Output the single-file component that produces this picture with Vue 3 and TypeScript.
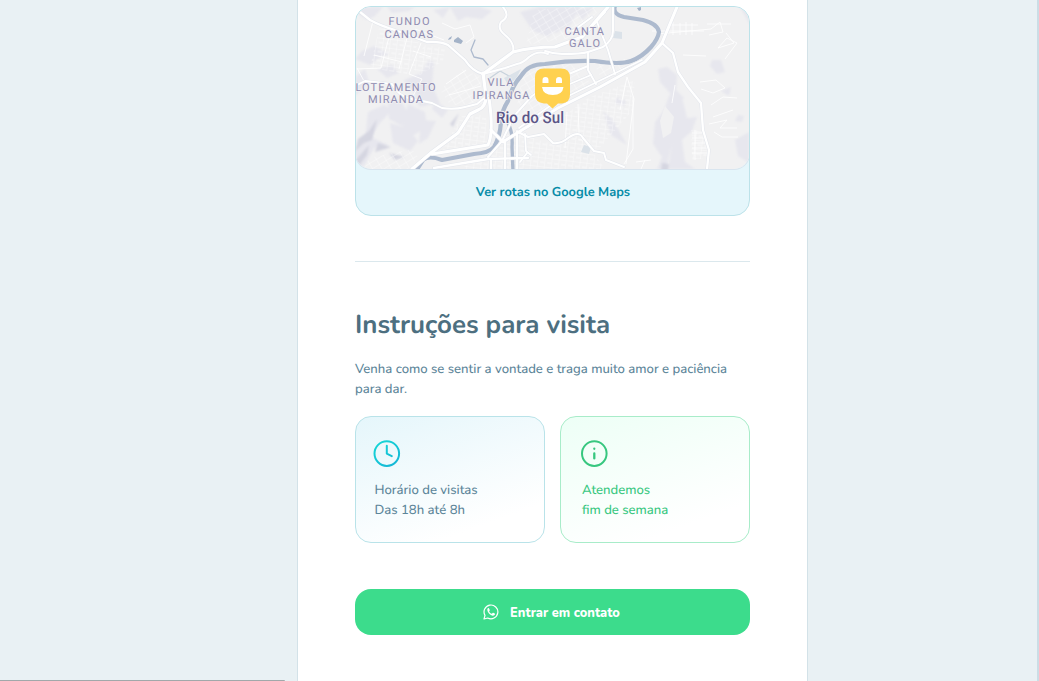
<script setup lang="ts">
interface Street { d: string; w: number }
interface Label { text: string; x: number; y: number; width: number }
interface Patch { points: string; grid: string }

const roads: Street[] = [
  { d: 'M355 8L370 20Q381 26 395 30L427 42Q440 41 448 45L465 60Q472 71 483 74', w: 2.3 },
  { d: 'M483 74L513 52Q532 47 555 47L582 37L608 7', w: 3.2 },
  { d: 'M503 7Q511 16 501 22Q497 29 505 35Q515 43 513 52', w: 2 },
  { d: 'M483 73L486 96Q486 107 478 110L470 114L458 133L432 152L412 169', w: 3.2 },
  { d: 'M432 154L488 145Q494 133 489 98', w: 3 },
  { d: 'M434 168L488 159L528 158', w: 2.3 },
  { d: 'M491 130L503 142L522 130L558 108L600 87L645 62L662 43L677 7', w: 3 },
  { d: 'M519 128L554 103L595 83L642 60', w: 1.7 },
  { d: 'M488 157L502 141L514 116L532 96L563 75', w: 2 },
  { d: 'M662 43L673 53L678 72L688 87L701 103L703 130L709 150L707 169', w: 2.3 },
  { d: 'M597 22L608 50L615 74', w: 1.9 },
  { d: 'M588 52L588 70L596 84', w: 1.9 },
  { d: 'M545 51Q554 54 562 54Q582 54 588 52L603 47Q613 40 613 31V7', w: 1.9 },
  { d: 'M545 84L588 66M551 92L591 75', w: 1.9 },
  { d: 'M483 74L505 68L517 64Q523 63 529 57Q538 50 548 54', w: 2 },
  { d: 'M518 132L528 137L544 134L553 143Q561 144 568 138Q579 130 583 138L594 151L604 153L606 160L624 167', w: 2 },
  { d: 'M355 86L365 81L392 84Q399 97 412 99L432 103L442 108Q454 110 465 107L477 104L488 95', w: 1.9 },
  { d: 'M505 140V169M517 131V169M491 160V169', w: 1.9 },
  { d: 'M525 134L526 151L531 155M520 162L527 153', w: 1.8 },
  { d: 'M573 31L592 17M581 38L605 12', w: 2 },
]
const labels: Label[] = [
  { text: 'FUNDO', x: 388.5, y: 25.4, width: 41 },
  { text: 'CANOAS', x: 384.5, y: 38.2, width: 48.5 },
  { text: 'LOTEAMENTO', x: 355.5, y: 90.8, width: 80 },
  { text: 'MIRANDA', x: 368, y: 103.4, width: 55 },
  { text: 'VILA', x: 487.5, y: 86.4, width: 26 },
  { text: 'IPIRANGA', x: 472.5, y: 99, width: 57 },
  { text: 'CANTA', x: 564.5, y: 34.6, width: 39.5 },
  { text: 'GALO', x: 569, y: 47.2, width: 31 },
]
const patches: Patch[] = [
  { points: '380,24 419,40 407,74 370,68', grid: 'a' },
  { points: '425,45 445,48 443,61 420,75 410,66', grid: 'a' },
  { points: '463,69 480,77 483,104 450,105 440,90', grid: 'b' },
  { points: '462,116 486,115 487,143 440,151', grid: 'a' },
  { points: '493,141 515,128 535,139 552,144 581,136 605,169 460,169 482,157', grid: 'a' },
  { points: '534,10 573,7 602,7 572,38 526,45', grid: 'b' },
  { points: '523,72 548,62 570,63 592,84 528,125 515,117', grid: 'b' },
  { points: '594,64 638,57 618,71 602,80', grid: 'b' },
  { points: '588,98 635,80 632,111 598,150 563,132 565,115', grid: 'a' },
  { points: '369,158 412,149 418,157 408,169 364,169', grid: 'b' },
  { points: '691,130 704,130 709,158 692,160', grid: 'a' },
]
</script>

<template>
  <div class="page">
    <main class="panel">
      <section class="location">
        <svg class="map" viewBox="356 7 393 162" aria-label="Rio do Sul">
          <defs>
            <pattern id="grid-a" width="7" height="9" patternUnits="userSpaceOnUse" patternTransform="rotate(7)">
              <path d="M0 0H7M0 0V9M3 5H7" />
            </pattern>
            <pattern id="grid-b" width="8" height="6" patternUnits="userSpaceOnUse" patternTransform="rotate(-31)">
              <path d="M0 0H8M0 0V6" />
            </pattern>
            <filter id="relief" x="-10%" y="-10%" width="120%" height="120%"><feGaussianBlur stdDeviation="1.3" /></filter>
          </defs>
          <rect x="355" y="6" width="396" height="165" fill="#f1f1f2" />
          <g filter="url(#relief)" fill="#e7e7ee">
            <path d="M355 7h28l-8 9-8 4-12-8zM387 7h28l-6 4-17 2zM450 7h30l12 4-10 8-16-2-8 4zM433 10l17-3-7 11zM362 51l12-5 15 8-10 4-9 7-15-6zM377 69l15-4 7 8-12 5zM404 80l17-7 8-13 5 2-2 23 8 18-21 4-3-12zM355 77l10-8 4 13-14 14zM388 99l13 2 9 15-8 10-13-7zM408 104l17 8 2 15-15 9-10-6z" />
            <path d="M368 112l16-7 8 5-12 13-9 14 17 8-14 3-10 18-9 3v-17l10-12zM390 123l17 5 11 13-8 10-17-8zM421 120l15 1-8 17-9 6zM435 100l13 10-6 8-10-9zM520 12l20-5 24 3-2 14-14 13-16-7z" />
            <path d="M545 7h35l-9 17-15 9-12-8zM574 10l21-3-13 13zM658 69l9-2 10 8-1 15 8 8-5 5-10-11-9-10zM712 60h9l4 12-8 2-7-8zM674 91l9 10 4 17 10-1-5 14-10 9 3 22 10 7h-27l4-25-6 25h-9l5-12-9-13 2-22 9-12 5-14zM603 111l10 9 14 25-16-10zM617 97l9 4-2 5-9-3zM735 140l14-8v31l-11-7zM738 115l6 1-2 6-7-1zM740 7l10 18V7zM721 91l10-4-2 9z" />
          </g>
          <path d="M665 106l-5 15 3 17 8-5 3-16z" fill="#f1f1f2" />
          <g filter="url(#relief)" fill="#d5d6e1">
            <path d="M377 119l-8 12-11 8-3 13 9-9 8-3zM369 145l-14 16 2 7 10-13zM378 143l13 4-16 5zM459 113l-9 11 3 3zM662 163l7 1-1 7h-7zM389 153l16 4-10 3z" />
          </g>
          <g class="minor">
            <polygon v-for="patch in patches" :key="patch.points" :points="patch.points" :fill="`url(#grid-${patch.grid})`" stroke="none" />
            <path d="M373 21l-9 35M391 29l-10 39-24 1M408 34l-9 35M421 43l-12 31 13 5-9 17M431 57l-18-6M442 23l13 6 15-4 4 12-8 6M415 29l29 11M374 55l28 7M364 81l-7-13M446 84l20-14M449 95l32-9M620 110l7-33 7 22-8 65M633 97v52l-9 15M567 112l-2 36M578 104l1 29M657 34l54-5 9-7 3 10-14 3M652 31h52M671 25h27M673 22v13M680 23v12M686 22v13M692 23v12M707 24h24M726 33l8 10-16 5 9-10 10 5-12 16M683 55l23 1M700 82l16-2 9 8-12 5-12-4M672 103l3-18M709 124l18-4-7 8h17M713 117l20-7M711 105l12-8 14 1M714 132l8 5h16M692 133h13M692 138h14M692 143h15M692 148h16M692 153h17M695 130v30M636 162l15-2M641 169l4-9" />
          </g>
          <g fill="none" stroke="#adbace" stroke-linecap="round" stroke-linejoin="round">
            <path d="M615 6Q612 14 624 17L643 20Q658 24 659 32Q658 39 651 47Q642 57 631 61Q620 65 595 61Q570 60 545 64Q528 64 521 76Q512 86 508 101Q501 112 501 122Q500 137 494 147Q489 153 474 154L442 160Q429 155 423 160L416 171" stroke-width="4.2" />
            <path d="M508 123Q513 132 512 147L513 171" stroke-width="3.4" />
            <path d="M475 40L471 50L474 57L483 59L488 65" stroke-width="1.3" />
            <path d="M490 78L500 71L509 76L516 74" stroke="#c7d2dc" stroke-width="1.3" />
          </g>
          <path d="M449 38l3-2-1 3-3 1zM454 40l4-3 5 4-2 3-7-2zM637 8l4-1v3l-2 1z" fill="#a4b3c8" />
          <path d="M615 31l7 1v7l-9-1zM584 145l7 2-2 7-8-2zM504 78l17-9-4 8-8 9z" fill="#dbe2e9" />
          <g fill="none" stroke-linecap="round" stroke-linejoin="round">
            <path v-for="road in roads" :key="`edge-${road.d}`" :d="road.d" stroke="#e3e6ec" :stroke-width="road.w + 1" />
            <path v-for="road in roads" :key="road.d" :d="road.d" stroke="#fff" :stroke-width="road.w" />
          </g>
          <g class="district">
            <text v-for="label in labels" :key="label.text" :x="label.x" :y="label.y" :textLength="label.width">{{ label.text }}</text>
          </g>
          <path d="M544 68.5h17q9 0 9 9v17q0 8-8 9h-4l-5.5 5-5.5-5h-3q-9-1-9-9v-17q0-9 9-9z" fill="#ffd14f" />
          <path d="M542.5 83v-3q0-3 3-3t3 3v3zM556 83v-3q0-3 3-3t3 3v3zM542 87h21.5q-1 8-10.7 8T542 87z" fill="#fff" />
          <text class="city" x="496" y="122.7" textLength="68" lengthAdjust="spacingAndGlyphs">Rio do Sul</text>
        </svg>
        <a class="routes">Ver rotas no Google Maps</a>
      </section>

      <hr class="divider">
      <h2 class="title">Instruções para visita</h2>
      <p class="description">Venha como se sentir a vontade e traga muito amor e paciência<br>para dar.</p>

      <div class="details">
        <article class="card hours">
          <svg class="icon" viewBox="0 0 28 28" fill="none">
            <defs><linearGradient id="clock" x1="4" y1="2" x2="22" y2="26" gradientUnits="userSpaceOnUse"><stop stop-color="#15d6d6" /><stop offset="1" stop-color="#15b6d6" /></linearGradient></defs>
            <g stroke="url(#clock)" stroke-width="2" stroke-linecap="round" stroke-linejoin="round"><circle cx="13.8" cy="13.6" r="12.3" /><path d="M13.8 5.8V13.6L18.8 16.1" /></g>
          </svg>
          <p>Horário de visitas<br>Das 18h até 8h</p>
        </article>
        <article class="card weekend">
          <svg class="icon" viewBox="0 0 28 28" fill="none" stroke="#37c77f" stroke-width="2" stroke-linecap="round">
            <circle cx="14.3" cy="13.6" r="12.3" /><path d="M14.3 13.4V18.4M14.3 8.7v.1" stroke-width="2.3" />
          </svg>
          <p>Atendemos<br>fim de semana</p>
        </article>
      </div>

      <button class="contact" type="button">
        <svg class="whatsapp" viewBox="0 0 16 16">
          <path d="M1 15l1-3.6A6.9 6.9 0 1 1 4.7 14z" fill="none" stroke="white" stroke-width="1.2" stroke-linejoin="round" />
          <path d="M5.4 3.9c-.4 0-1.1.7-1.1 1.7 0 3.1 3.4 5.9 5.5 6.1.9.1 2.1-.7 2.2-1.4.1-.6-.1-.7-1.7-1.5-.3-.1-.5 0-.7.2l-.7.8c-1.3-.4-2.2-1.4-2.8-2.4l.6-.8c.2-.3 0-.5-.5-1.8-.2-.6-.3-.9-.8-.9z" fill="white" />
        </svg>
        <span>Entrar em contato</span>
      </button>
    </main>
    <div class="status"></div>
  </div>
</template>

<style>
html, body { margin: 0; overflow: hidden; }
</style>

<style scoped>
* { box-sizing: border-box; }
.page {
  position: relative;
  height: 681px;
  padding-left: 297px;
  background: #e9f1f4;
  border-right: 2px solid #cbdde5;
  font-family: Nunito, Lato, "Open Sans", sans-serif;
  text-rendering: geometricPrecision;
  overflow: hidden;
}
.panel {
  width: 511px;
  height: 681px;
  padding: 6px 57px 0;
  background: white;
  border: solid #d3e2e8;
  border-width: 0 1px;
}
.location {
  height: 210px;
  overflow: hidden;
  background: #e5f6fb;
  border: 1px solid #bce2e9;
  border-radius: 16px;
}
.map {
  display: block;
  width: 393px;
  height: 162px;
  border-radius: 15px;
  box-shadow: 0 0 0 1px #d9e5ef;
}
.minor { fill: none; stroke: #fff; stroke-width: .8; }
pattern path { fill: none; stroke: #fff; stroke-width: .6; }
.district { font: 11px Roboto, sans-serif; fill: #8f8bb0; stroke: #f1f1f3; stroke-width: 1.4px; paint-order: stroke; }
.city { font: 500 16px Roboto, sans-serif; fill: #5c5687; stroke: #f5f5f7; stroke-width: 2px; paint-order: stroke; }
.routes {
  display: block;
  height: 46px;
  padding-left: 1px;
  line-height: 46px;
  text-align: center;
  color: #078ca8;
  font-size: 12.8px;
  font-weight: 700;
}
.divider { height: 1px; margin: 45px 0 47px; border: 0; background: #dbe8ed; }
.title { margin: 0; color: #4d6f80; font-size: 25.9px; line-height: 34px; font-weight: 700; }
.description { margin: 16px 0 17px; color: #5c8599; font-size: 13.1px; font-weight: 500; line-height: 20px; white-space: nowrap; }
.details { display: grid; grid-template-columns: 190px 190px; gap: 15px; }
.card { height: 127px; padding: 23px 18px; border: 1px solid #b9e3e9; border-radius: 16px; font-size: 13.1px; font-weight: 500; line-height: 20px; }
.card p { margin: 12px 0 0 1px; }
.hours { background: linear-gradient(160deg, #e5f6fb, white 80%); color: #5c8599; }
.hours p { margin-left: .5px; }
.weekend { padding-left: 20px; background: linear-gradient(160deg, #edfff6, white 80%); border-color: #a8ecc9; color: #37c77f; }
.icon { display: block; width: 28px; height: 28px; margin-left: -1px; }
.contact {
  display: flex;
  align-items: center;
  justify-content: center;
  gap: 11px;
  width: 100%;
  height: 46px;
  margin-top: 46px;
  padding: 0 2px 0 0;
  border: 0;
  border-radius: 16px;
  background: #3cdc8c;
  color: white;
  font: 800 12.8px Nunito, Lato, sans-serif;
}
.contact span { padding-top: 1px; }
.whatsapp { width: 16px; height: 16px; }
.status { position: absolute; left: 0; bottom: 0; width: 285px; height: 1px; background: #a2a8aa; border-radius: 0 1px 0 0; }
</style>
